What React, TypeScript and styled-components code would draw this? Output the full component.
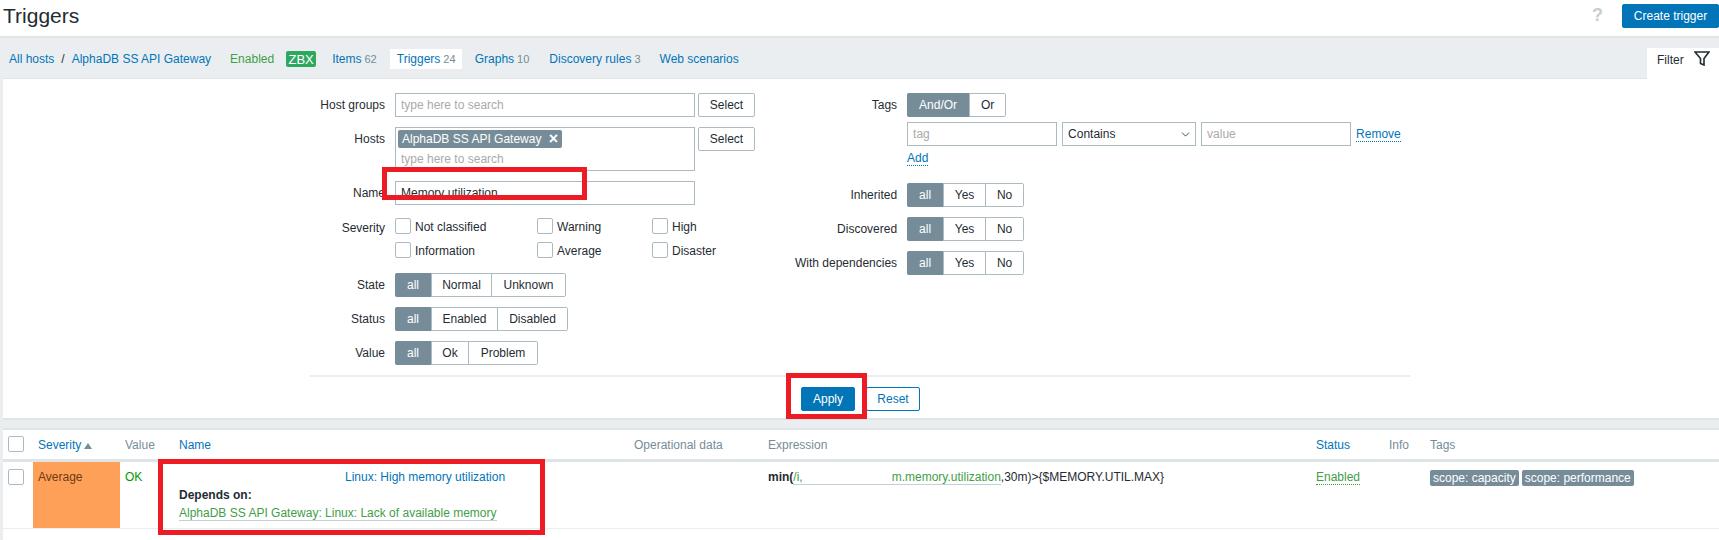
import styled, { createGlobalStyle } from "styled-components";
import { ChevronDown } from "lucide-react";

const GlobalStyle = createGlobalStyle`
  html, body {
    margin: 0;
    height: 540px;
    overflow: hidden;
    background: #ebeef0;
  }
  body, input {
    font-family: "Liberation Sans", Arial, sans-serif;
    font-size: 12px;
    color: #1f2c33;
  }
  * {
    box-sizing: border-box;
  }
`;

const Page = styled.div`
  position: relative;
  width: 1719px;
  height: 540px;
  overflow: hidden;
`;

const Header = styled.header`
  display: flex;
  align-items: center;
  height: 38px;
  padding: 3px 0 8px 3px;
  background: #fff;
  border-bottom: 2px solid #dfe4e7;
`;

const Title = styled.h1`
  margin: 0;
  flex: 1;
  font-size: 21px;
  font-weight: 400;
  line-height: 24px;
`;

const Help = styled.span`
  width: 25px;
  margin-right: 12px;
  font-size: 18px;
  font-weight: 700;
  color: #c5ced3;
  text-align: center;
`;

const PrimaryButton = styled.button`
  height: 24px;
  padding: 0;
  border: 1px solid #0275b8;
  border-radius: 2px;
  background: #0275b8;
  color: #fff;
  font: inherit;
`;

const CreateButton = styled(PrimaryButton)`
  width: 97px;
`;

const NavBar = styled.nav`
  display: flex;
  align-items: center;
  height: 40px;
  padding: 2px 0 0 9px;
`;

const NavLink = styled.a<{ $gap?: number }>`
  margin-left: ${(p) => p.$gap ?? 0}px;
  color: #0275b8;
  white-space: nowrap;
`;

const Count = styled.span`
  margin-left: 3px;
  color: #768d99;
  font-size: 11px;
`;

const Slash = styled.span`
  margin: 0 7px;
  color: #1f2c33;
`;

const EnabledText = styled.span`
  margin-left: 19px;
  color: #429e47;
`;

const ZbxBadge = styled.span`
  display: flex;
  align-items: center;
  justify-content: center;
  width: 30px;
  height: 16px;
  margin-left: 12px;
  border-radius: 2px;
  background: #2fa85f;
  color: #fff;
  font-size: 13px;
`;

const ActiveTab = styled.span`
  display: flex;
  align-items: center;
  height: 20px;
  width: 72px;
  margin-left: 13px;
  padding-left: 7px;
  background: #fff;
  color: #0275b8;
  white-space: nowrap;
`;

const FilterTab = styled.div`
  display: flex;
  align-items: center;
  justify-content: space-between;
  align-self: flex-end;
  position: relative;
  top: 2px;
  z-index: 1;
  width: 72px;
  height: 32px;
  margin-left: auto;
  padding: 0 9px 8px 10px;
  background: #fff;

  svg {
    margin-bottom: 3px;
  }
`;

const FilterPanel = styled.section`
  height: 342px;
  margin-left: 3px;
  background: #fff;
  border-top: 1px solid #dfe4e7;
  border-bottom: 2px solid #dfe4e7;
`;

const FormColumns = styled.div`
  display: flex;
  height: 296px;
  padding-top: 14px;
`;

const LeftColumn = styled.div`
  display: grid;
  grid-template-columns: 382px 1fr;
  gap: 10px;
  align-content: start;
  width: 792px;
`;

const RightColumn = styled.div`
  display: grid;
  grid-template-columns: auto 1fr;
  gap: 10px;
  align-content: start;
  justify-items: start;
`;

const Label = styled.label`
  justify-self: end;
  height: 24px;
  line-height: 24px;
  text-align: right;
  white-space: nowrap;
`;

const SeverityLabel = styled(Label)`
  margin-top: 1px;
`;

const Control = styled.div`
  display: flex;
  align-items: flex-start;
  gap: 3px;
`;

const SeverityControl = styled(Control)`
  margin: 3px 0 5px;
`;

const TextInput = styled.input<{ $width?: number }>`
  width: ${(p) => p.$width ?? 300}px;
  height: 24px;
  padding: 0 5px;
  border: 1px solid #acbbc2;
  outline: none;
  background: #fff;

  &::placeholder {
    color: #aaa;
    opacity: 1;
  }
`;

const SelectButton = styled.button`
  width: 57px;
  height: 24px;
  border: 1px solid #acbbc2;
  border-radius: 2px;
  background: #fff;
  color: #1f2c33;
  font: inherit;
`;

const MultiSelect = styled.div`
  width: 300px;
  height: 44px;
  padding: 2px;
  border: 1px solid #acbbc2;
`;

const Chip = styled.span`
  display: flex;
  align-items: center;
  justify-content: space-between;
  width: 164px;
  height: 18px;
  padding: 0 4px;
  border-radius: 2px;
  background: #768d99;
  color: #fff;
`;

const ChipClose = styled.b`
  font-size: 16px;
  line-height: 18px;
`;

const MultiPlaceholder = styled.div`
  padding: 4px 3px 0;
  color: #aaa;
  line-height: 14px;
`;

const SeverityGrid = styled.div`
  display: grid;
  grid-template-columns: 142px 115px 90px;
  grid-auto-rows: 16px;
  row-gap: 8px;
`;

const CheckLabel = styled.span`
  display: flex;
  align-items: center;
  gap: 4px;
  padding-top: 2px;
  white-space: nowrap;
`;

const CheckBox = styled.span`
  display: block;
  flex: none;
  width: 16px;
  height: 16px;
  border: 1px solid #acbbc2;
  border-radius: 2px;
  background: #fff;

  ${CheckLabel} & {
    margin-top: -2px;
  }
`;

const Segments = styled.div`
  display: flex;
  width: fit-content;
  height: 24px;
  border: 1px solid #acbbc2;
  border-radius: 2px;
`;

const Segment = styled.span<{ $width: number; $active?: boolean }>`
  width: ${(p) => p.$width}px;
  margin: ${(p) => (p.$active ? "-1px 0 -1px -1px" : "0")};
  line-height: ${(p) => (p.$active ? 24 : 22)}px;
  text-align: center;
  background: ${(p) => (p.$active ? "#768d99" : "#fff")};
  color: ${(p) => (p.$active ? "#fff" : "#1f2c33")};
  border-radius: ${(p) => (p.$active ? "2px 0 0 2px" : "0")};

  & + & {
    border-left: 1px solid #acbbc2;
  }
`;

const TagsBlock = styled.div`
  display: flex;
  flex-direction: column;
  height: 80px;
`;

const TagRow = styled.div`
  display: flex;
  align-items: center;
  gap: 5px;
  margin-top: 5px;
`;

const FakeSelect = styled.div`
  display: flex;
  align-items: center;
  justify-content: space-between;
  width: 134px;
  height: 24px;
  padding: 0 3px 0 5px;
  border: 1px solid #acbbc2;
`;

const DottedLink = styled.a`
  color: #0275b8;
  border-bottom: 1px dotted #0275b8;
  line-height: 14px;
`;

const AddLink = styled(DottedLink)`
  align-self: flex-start;
  margin-top: 5px;
`;

const ActionRow = styled.div`
  display: flex;
  gap: 11px;
  width: 1100px;
  margin-left: 307px;
  padding: 10px 0 0 491px;
  border-top: 2px solid #ebeef0;
`;

const ApplyButton = styled(PrimaryButton)`
  width: 54px;
`;

const ResetButton = styled.button`
  width: 54px;
  height: 24px;
  border: 1px solid #0275b8;
  border-radius: 2px;
  background: #fff;
  color: #0275b8;
  font: inherit;
`;

const Table = styled.section`
  height: 112px;
  margin: 8px 0 0 3px;
  background: #fff;
  border-top: 2px solid #dfe4e7;
`;

const TableRow = styled.div<{ $head?: boolean }>`
  display: grid;
  grid-template-columns: 30px 87px 54px 455px 134px 548px 73px 41px 1fr;
  height: ${(p) => (p.$head ? 32 : 67)}px;
  border-bottom: ${(p) => (p.$head ? "3px solid #dfe4e7" : "1px solid #ebeef0")};
`;

const HeadCell = styled.div<{ $link?: boolean }>`
  padding: 8px 0 0 5px;
  line-height: 14px;
  color: ${(p) => (p.$link ? "#0275b8" : "#768d99")};
  white-space: nowrap;
`;

const Cell = styled.div`
  padding: 8px 0 0 5px;
  line-height: 14px;
  white-space: nowrap;
`;

const CheckCell = styled.div<{ $head?: boolean }>`
  padding: ${(p) => (p.$head ? 6 : 7)}px 0 0 5px;
`;

const SeverityCell = styled(Cell)`
  background: #ffa059;
  color: #6d3b12;
`;

const SortArrow = styled.span`
  display: inline-block;
  width: 0;
  height: 0;
  margin-left: 3px;
  border-left: 4px solid transparent;
  border-right: 4px solid transparent;
  border-bottom: 6px solid #768d99;
`;

const OkText = styled.span`
  color: #009900;
`;

const TriggerLink = styled.a`
  display: block;
  margin-left: 166px;
  color: #0275b8;
`;

const Depends = styled.div`
  margin-top: 4px;
  font-weight: 700;
`;

const DependLink = styled.a`
  display: inline-block;
  margin-top: 4px;
  color: #429e47;
  border-bottom: 1px solid #c5d0d6;
`;

const ExprLink = styled.span`
  display: inline-block;
  color: #429e47;
  border-bottom: 1px solid #c5d0d6;
  white-space: nowrap;
`;

const ExprHidden = styled.span`
  display: inline-block;
  width: 89px;
`;

const StatusLink = styled.a`
  color: #429e47;
  border-bottom: 1px dotted #429e47;
`;

const TagList = styled.div`
  display: flex;
  gap: 3px;
`;

const TagBadge = styled.span`
  height: 16px;
  padding: 0 3px;
  border-radius: 2px;
  background: #768d99;
  color: #fff;
  line-height: 16px;
`;

// red annotations someone drew on top of the screenshot
const Annotation = styled.div<{ $x: number; $y: number; $w: number; $h: number }>`
  position: absolute;
  left: ${(p) => p.$x}px;
  top: ${(p) => p.$y}px;
  width: ${(p) => p.$w}px;
  height: ${(p) => p.$h}px;
  border: 5px solid #ed1c24;
  pointer-events: none;
  z-index: 5;
`;

const FunnelIcon = () => (
  <svg width="16" height="15" viewBox="0 0 16 15" fill="none" stroke="#1f2c33" strokeWidth="1.6">
    <path d="M1 1h14L10 7.5V14L6.5 12.5V7.5z" />
  </svg>
);

type Seg = [string, number];

const SegmentGroup = ({ items }: { items: Seg[] }) => (
  <Segments>
    {items.map(([text, width], i) => (
      <Segment key={text} $width={width} $active={i === 0}>
        {text}
      </Segment>
    ))}
  </Segments>
);

const allYesNo: Seg[] = [
  ["all", 36],
  ["Yes", 42],
  ["No", 38],
];

const severities = ["Not classified", "Warning", "High", "Information", "Average", "Disaster"];

export default function App() {
  return (
    <Page>
      <GlobalStyle />
      <Header>
        <Title>Triggers</Title>
        <Help>?</Help>
        <CreateButton>Create trigger</CreateButton>
      </Header>

      <NavBar>
        <NavLink>All hosts</NavLink>
        <Slash>/</Slash>
        <NavLink>AlphaDB SS API Gateway</NavLink>
        <EnabledText>Enabled</EnabledText>
        <ZbxBadge>ZBX</ZbxBadge>
        <NavLink $gap={16}>
          Items<Count>62</Count>
        </NavLink>
        <ActiveTab>
          Triggers<Count>24</Count>
        </ActiveTab>
        <NavLink $gap={13}>
          Graphs<Count>10</Count>
        </NavLink>
        <NavLink $gap={20}>
          Discovery rules<Count>3</Count>
        </NavLink>
        <NavLink $gap={19}>Web scenarios</NavLink>
        <FilterTab>
          Filter
          <FunnelIcon />
        </FilterTab>
      </NavBar>

      <FilterPanel>
        <FormColumns>
          <LeftColumn>
            <Label>Host groups</Label>
            <Control>
              <TextInput placeholder="type here to search" />
              <SelectButton>Select</SelectButton>
            </Control>

            <Label>Hosts</Label>
            <Control>
              <MultiSelect>
                <Chip>
                  AlphaDB SS API Gateway
                  <ChipClose>×</ChipClose>
                </Chip>
                <MultiPlaceholder>type here to search</MultiPlaceholder>
              </MultiSelect>
              <SelectButton>Select</SelectButton>
            </Control>

            <Label>Name</Label>
            <Control>
              <TextInput defaultValue="Memory utilization" />
            </Control>

            <SeverityLabel>Severity</SeverityLabel>
            <SeverityControl>
              <SeverityGrid>
                {severities.map((name) => (
                  <CheckLabel key={name}>
                    <CheckBox />
                    {name}
                  </CheckLabel>
                ))}
              </SeverityGrid>
            </SeverityControl>

            <Label>State</Label>
            <SegmentGroup items={[["all", 36], ["Normal", 60], ["Unknown", 74]]} />

            <Label>Status</Label>
            <SegmentGroup items={[["all", 36], ["Enabled", 66], ["Disabled", 70]]} />

            <Label>Value</Label>
            <SegmentGroup items={[["all", 36], ["Ok", 37], ["Problem", 69]]} />
          </LeftColumn>

          <RightColumn>
            <Label>Tags</Label>
            <TagsBlock>
              <SegmentGroup items={[["And/Or", 62], ["Or", 36]]} />
              <TagRow>
                <TextInput $width={150} placeholder="tag" />
                <FakeSelect>
                  Contains
                  <ChevronDown size={13} strokeWidth={1.5} />
                </FakeSelect>
                <TextInput $width={150} placeholder="value" />
                <DottedLink>Remove</DottedLink>
              </TagRow>
              <AddLink>Add</AddLink>
            </TagsBlock>

            <Label>Inherited</Label>
            <SegmentGroup items={allYesNo} />

            <Label>Discovered</Label>
            <SegmentGroup items={allYesNo} />

            <Label>With dependencies</Label>
            <SegmentGroup items={allYesNo} />
          </RightColumn>
        </FormColumns>

        <ActionRow>
          <ApplyButton>Apply</ApplyButton>
          <ResetButton>Reset</ResetButton>
        </ActionRow>
      </FilterPanel>

      <Table>
        <TableRow $head>
          <CheckCell $head>
            <CheckBox />
          </CheckCell>
          <HeadCell $link>
            Severity
            <SortArrow />
          </HeadCell>
          <HeadCell>Value</HeadCell>
          <HeadCell $link>Name</HeadCell>
          <HeadCell>Operational data</HeadCell>
          <HeadCell>Expression</HeadCell>
          <HeadCell $link>Status</HeadCell>
          <HeadCell>Info</HeadCell>
          <HeadCell>Tags</HeadCell>
        </TableRow>
        <TableRow>
          <CheckCell>
            <CheckBox />
          </CheckCell>
          <SeverityCell>Average</SeverityCell>
          <Cell>
            <OkText>OK</OkText>
          </Cell>
          <Cell>
            <TriggerLink>Linux: High memory utilization</TriggerLink>
            <Depends>Depends on:</Depends>
            <DependLink>AlphaDB SS API Gateway: Linux: Lack of available memory</DependLink>
          </Cell>
          <Cell />
          <Cell>
            <b>min(</b>
            <ExprLink>
              /i,
              <ExprHidden />
              m.memory.utilization
            </ExprLink>
            ,30m)&gt;{"{$MEMORY.UTIL.MAX}"}
          </Cell>
          <Cell>
            <StatusLink>Enabled</StatusLink>
          </Cell>
          <Cell />
          <Cell>
            <TagList>
              <TagBadge>scope: capacity</TagBadge>
              <TagBadge>scope: performance</TagBadge>
            </TagList>
          </Cell>
        </TableRow>
      </Table>

      <Annotation $x={382} $y={167} $w={205} $h={33} />
      <Annotation $x={786} $y={373} $w={81} $h={46} />
      <Annotation $x={158} $y={459} $w={387} $h={76} />
    </Page>
  );
}
